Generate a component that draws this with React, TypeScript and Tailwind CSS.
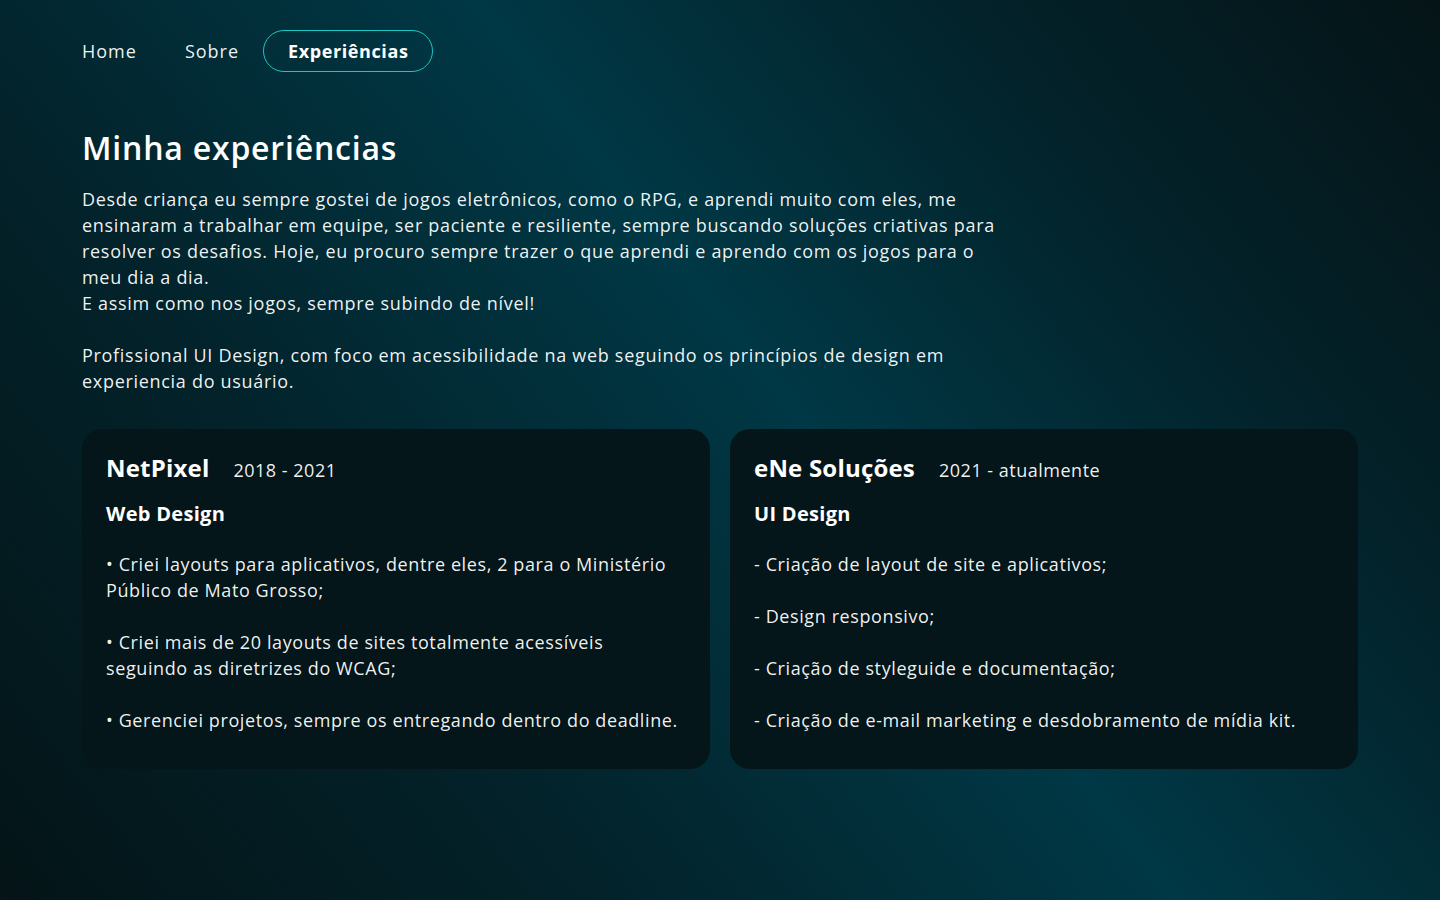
import React from "react";

const font = { fontFamily: '"Open Sans", "Liberation Sans", sans-serif' };

function Card({
  company,
  period,
  role,
  items,
}: {
  company: string;
  period: string;
  role: string;
  items: string[];
}) {
  return (
    <div className="flex-1 rounded-[20px] bg-[#041619] px-6 pt-[23px] pb-[36px] text-white">
      <div className="flex items-baseline gap-6">
        <h2 className="text-[24px] font-bold leading-[32px] tracking-[0.2px]">{company}</h2>
        <span className="text-[18px] leading-[26px] tracking-[0.5px] text-white/95">{period}</span>
      </div>
      <h3 className="mt-[17px] text-[20px] font-bold leading-[26px] tracking-[0.3px]">{role}</h3>
      <div className="mt-[24px] flex max-w-[576px] flex-col gap-[26px] text-[18px] leading-[26px] tracking-[0.6px] text-white/95">
        {items.map((t, i) => (
          <p key={i}>{t}</p>
        ))}
      </div>
    </div>
  );
}

export default function App() {
  return (
    <div
      style={font}
      className="min-h-[900px] w-full bg-[linear-gradient(52deg,#041417_0%,#03222a_28%,#003845_55%,#03222a_78%,#051417_100%)] px-[82px] pt-[30px] text-white"
    >
      <nav className="flex items-center text-[18px]">
        <a className="mr-12 leading-[41px] tracking-[1px] text-white/95">Home</a>
        <a className="mr-6 leading-[41px] tracking-[1px] text-white/95">Sobre</a>
        <a className="h-[42px] rounded-full border border-[#19c7c4] px-6 font-bold leading-[40px] tracking-[0.6px] text-white">
          Experiências
        </a>
      </nav>

      <h1 className="mt-[56px] text-[32px] font-semibold leading-[40px] tracking-[0.8px]">
        Minha experiências
      </h1>

      <p className="mt-[18px] text-[18px] leading-[26px] tracking-[0.7px] text-white/95">
        Desde criança eu sempre gostei de jogos eletrônicos, como o RPG, e aprendi muito com eles, me
        <br />
        ensinaram a trabalhar em equipe, ser paciente e resiliente, sempre buscando soluções criativas para
        <br />
        resolver os desafios. Hoje, eu procuro sempre trazer o que aprendi e aprendo com os jogos para o
        <br />
        meu dia a dia.
        <br />
        E assim como nos jogos, sempre subindo de nível!
        <br />
        <br />
        Profissional UI Design, com foco em acessibilidade na web seguindo os princípios de design em
        <br />
        experiencia do usuário.
      </p>

      <div className="mt-[35px] flex gap-5">
        <Card
          company="NetPixel"
          period="2018 - 2021"
          role="Web Design"
          items={[
            "•  Criei layouts para aplicativos, dentre eles, 2 para o Ministério Público de Mato Grosso;",
            "• Criei mais de 20 layouts de sites totalmente acessíveis seguindo as diretrizes do WCAG;",
            "• Gerenciei projetos, sempre os entregando dentro do deadline.",
          ]}
        />
        <Card
          company="eNe Soluções"
          period="2021 - atualmente"
          role="UI Design"
          items={[
            "- Criação de layout de site e aplicativos;",
            "- Design responsivo;",
            "- Criação de styleguide e documentação;",
            "- Criação de e-mail marketing e desdobramento de mídia kit.",
          ]}
        />
      </div>
    </div>
  );
}
